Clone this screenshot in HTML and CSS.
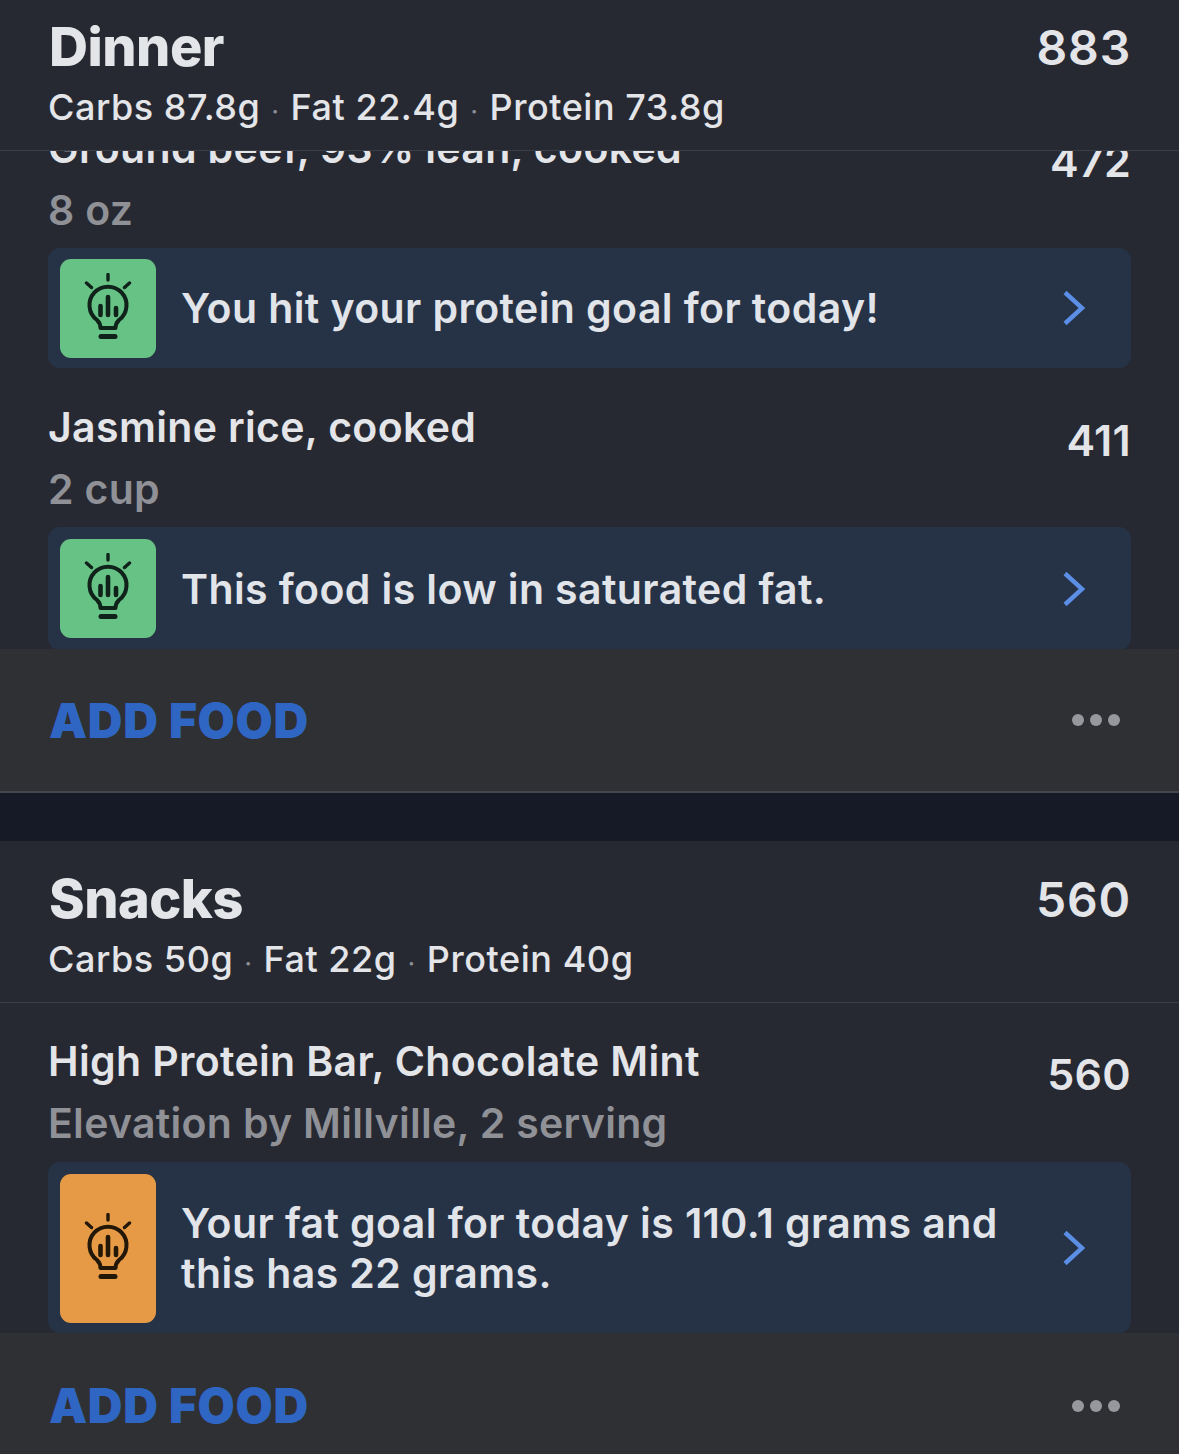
FILE: index.html
```html
<!DOCTYPE html>
<html lang="en">
<head>
    <meta charset="UTF-8">
    <meta name="viewport" content="width=device-width, initial-scale=1.0">
    <title>Diary</title>
    <link rel="stylesheet" href="styles.css">
</head>
<body>
    <svg class="sprites" width="0" height="0">
        <symbol id="bulb" viewBox="0 0 48 66">
            <g fill="none" stroke="currentColor" stroke-linecap="round" stroke-linejoin="round">
                <path stroke-width="3.4" d="M24 1.500v5.500M2.500 10l5 4.500M45.500 10l-5 4.500"/>
                <path stroke-width="4" d="M16.500 55c0-3-1-5.500-3.500-8A18.500 18.500 0 1 1 35 47c-2.500 2.500-3.500 5-3.500 8z"/>
                <path stroke-width="4.600" d="M24 24v18M16.500 33v9M32 35v7"/>
                <path stroke-width="5" d="M17 63.500h14"/>
            </g>
        </symbol>
        <symbol id="chevron" viewBox="0 0 24 36">
            <path d="M3 2.500l17 15.500L3 33.500" fill="none" stroke="currentColor" stroke-width="4.400"/>
        </symbol>
    </svg>

    <!-- Dinner -->
    <header class="meal-head dinner-head">
        <div class="meal-top">
            <h2>Dinner</h2>
            <span class="meal-cal">883</span>
        </div>
        <p class="macros">Carbs 87.8g <i>·</i> Fat 22.4g <i>·</i> Protein 73.8g</p>
    </header>

    <div class="foods dinner-foods">
        <div class="food clipped">
            <div>
                <div class="food-name">Ground beef, 93% lean, cooked</div>
                <div class="food-amount">8 oz</div>
            </div>
            <span class="food-cal">472</span>
        </div>
        <a class="tip">
            <span class="tip-icon green"><svg><use href="#bulb"/></svg></span>
            <span class="tip-text">You hit your protein goal for today!</span>
            <svg class="chevron"><use href="#chevron"/></svg>
        </a>
        <div class="food">
            <div>
                <div class="food-name">Jasmine rice, cooked</div>
                <div class="food-amount">2 cup</div>
            </div>
            <span class="food-cal">411</span>
        </div>
        <a class="tip">
            <span class="tip-icon green"><svg><use href="#bulb"/></svg></span>
            <span class="tip-text">This food is low in saturated fat.</span>
            <svg class="chevron"><use href="#chevron"/></svg>
        </a>
    </div>

    <footer class="meal-foot dinner-foot">
        <span class="add-food">ADD FOOD</span>
        <span class="dots"><b></b><b></b><b></b></span>
    </footer>

    <div class="spacer"></div>

    <!-- Snacks -->
    <header class="meal-head snacks-head">
        <div class="meal-top">
            <h2>Snacks</h2>
            <span class="meal-cal">560</span>
        </div>
        <p class="macros">Carbs 50g <i>·</i> Fat 22g <i>·</i> Protein 40g</p>
    </header>

    <div class="foods snacks-foods">
        <div class="food">
            <div>
                <div class="food-name">High Protein Bar, Chocolate Mint</div>
                <div class="food-amount">Elevation by Millville, 2 serving</div>
            </div>
            <span class="food-cal">560</span>
        </div>
        <a class="tip tall">
            <span class="tip-icon orange"><svg><use href="#bulb"/></svg></span>
            <span class="tip-text">Your fat goal for today is 110.1 grams and this has 22 grams.</span>
            <svg class="chevron"><use href="#chevron"/></svg>
        </a>
    </div>

    <footer class="meal-foot snacks-foot">
        <span class="add-food">ADD FOOD</span>
        <span class="dots"><b></b><b></b><b></b></span>
    </footer>
</body>
</html>
```

FILE: styles.css
```css
html, body {
    margin: 0;
    padding: 0;
}
body {
    width: 1179px;
    height: 1454px;
    overflow: hidden;
    font-family: Inter, "Liberation Sans", sans-serif;
    background-color: #272932;
    color: #e4e5e8;
}
.sprites {
    display: block;
    height: 0;
}
.meal-head {
    box-sizing: border-box;
    padding: 0 48px 0 49px;
    border-bottom: 1px solid #3c3e47;
}
.dinner-head {
    height: 151px;
    padding-top: 15px;
}
.snacks-head {
    height: 162px;
    padding-top: 26px;
}
.meal-top {
    display: flex;
    justify-content: space-between;
    align-items: center;
    height: 62px;
}
h2 {
    margin: 0;
    font-size: 54px;
    font-weight: 800;
    letter-spacing: -0.5px;
}
.meal-cal {
    padding-top: 3px;
    font-size: 48px;
    font-weight: 600;
    letter-spacing: 0.8px;
}
.macros {
    margin: 7px 0 0 -1px;
    font-size: 36px;
    line-height: 46px;
    font-weight: 500;
    letter-spacing: 0.55px;
    white-space: pre;
}
.macros i {
    margin: 0 1px;
    font-style: normal;
    font-size: 24px;
    color: #8d8f96;
}
.foods {
    overflow: hidden;
    padding: 0 48px;
}
.dinner-foods {
    height: 498px;
}
.snacks-foods {
    height: 330px;
}
.food {
    display: flex;
    justify-content: space-between;
    align-items: flex-start;
    box-sizing: border-box;
    height: 159px;
    padding-top: 32px;
}
.clipped {
    margin-top: -62px;
}
.snacks-foods .food {
    padding-top: 31px;
}
.food-name {
    font-size: 41px;
    line-height: 54px;
    font-weight: 600;
    letter-spacing: 0.35px;
}
.food-amount {
    margin-top: 8px;
    font-size: 41px;
    line-height: 54px;
    font-weight: 600;
    letter-spacing: 0.3px;
    color: #8f9197;
}
.food-cal {
    margin-top: 13px;
    font-size: 43px;
    line-height: 54px;
    font-weight: 600;
    letter-spacing: 0.3px;
}
.tip {
    display: flex;
    align-items: center;
    box-sizing: border-box;
    height: 120px;
    padding: 0 45px 0 12px;
    border-radius: 12px;
    background-color: #263246;
}
.dinner-foods .tip:last-child {
    height: 123px;
}
.tall {
    height: 171px;
}
.tip-icon {
    display: flex;
    align-items: center;
    justify-content: center;
    flex: none;
    align-self: flex-start;
    box-sizing: border-box;
    width: 96px;
    height: 99px;
    margin-top: 11px;
    padding-bottom: 6px;
    border-radius: 11px;
    color: #10231b;
}
.dinner-foods .tip:last-child .tip-icon {
    margin-top: 12px;
}
.tall .tip-icon {
    height: 149px;
    margin-top: 12px;
}
.tip-icon svg {
    width: 48px;
    height: 66px;
}
.green {
    background-color: #67c285;
}
.orange {
    background-color: #e79a45;
    color: #231708;
}
.tip-text {
    flex: 1;
    margin-left: 25px;
    padding-right: 40px;
    font-size: 41px;
    line-height: 50px;
    font-weight: 600;
    letter-spacing: 0.4px;
    color: #e1e4e9;
}
.chevron {
    flex: none;
    width: 24px;
    height: 36px;
    color: #5b8fe6;
}
.meal-foot {
    display: flex;
    justify-content: space-between;
    align-items: center;
    box-sizing: border-box;
    padding: 0 59px 0 49px;
    background-color: #2f3034;
}
.dinner-foot {
    height: 144px;
    border-bottom: 2px solid #44464d;
}
.snacks-foot {
    height: 121px;
    padding-top: 24px;
}
.add-food {
    font-size: 48px;
    font-weight: 900;
    letter-spacing: 0.7px;
    color: #2f66c4;
}
.dots {
    display: flex;
    gap: 6px;
}
.dots b {
    width: 12px;
    height: 12px;
    border-radius: 50%;
    background-color: #97989d;
}
.spacer {
    height: 48px;
    background-color: #161926;
}
```
